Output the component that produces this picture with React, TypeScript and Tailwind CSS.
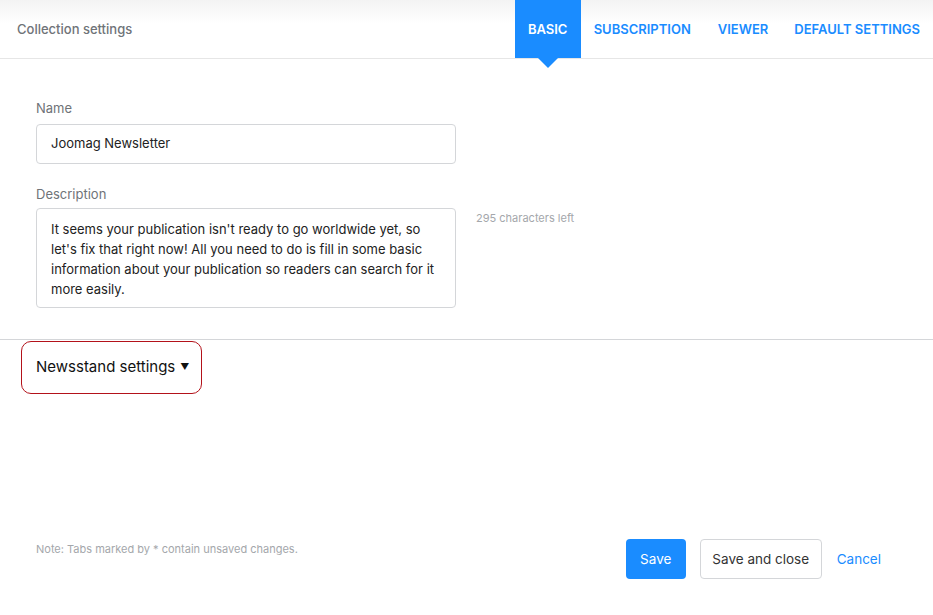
export default function App() {
  const font = { fontFamily: "Inter, 'Open Sans', sans-serif" };
  return (
    <div className="relative h-[615px] w-[933px] overflow-hidden bg-white text-[#222]" style={font}>
      {/* header */}
      <div className="flex h-[59px] items-stretch border-b border-[#e6e6e6] bg-gradient-to-b from-[#f3f3f3] to-white to-[40%]">
        <div className="flex items-center pl-[17px] pt-[1px] text-[13px] font-medium text-[#6f7378]">Collection settings</div>
        <div className="ml-auto flex items-stretch pr-[13px]">
          <div className="relative flex w-[66px] items-center justify-center bg-[#1a8cff] pt-[1px] text-[13px] font-semibold text-white">
            BASIC
            <span className="absolute left-1/2 top-full -ml-[10px] h-0 w-0 border-x-[10px] border-t-[10px] border-x-transparent border-t-[#1a8cff]" />
          </div>
          <div className="flex items-center pl-[13px] pt-[1px] text-[13px] font-semibold text-[#1a8cff]">SUBSCRIPTION</div>
          <div className="flex items-center pl-[27px] pt-[1px] text-[13px] font-semibold text-[#1a8cff]">VIEWER</div>
          <div className="flex items-center pl-[26px] pt-[1px] text-[13px] font-semibold text-[#1a8cff]">DEFAULT SETTINGS</div>
        </div>
      </div>

      {/* form */}
      <div className="pl-[36px] pt-[41px]">
        <div className="text-[13px] leading-[16px] text-[#6f7378]">Name</div>
        <div className="mt-[8px] flex h-[40px] w-[420px] items-center rounded-[4px] border border-[#d4d6d9] px-[14px] text-[13px]">
          Joomag Newsletter
        </div>
        <div className="mt-[22px] text-[13px] leading-[16px] text-[#6f7378]">Description</div>
        <div className="mt-[6px] flex items-start">
          <div className="h-[100px] w-[420px] rounded-[4px] border border-[#d4d6d9] px-[14px] pt-[10px] text-[13px] leading-[20px]">
            It seems your publication isn't ready to go worldwide yet, so let's fix that right now! All you need to do is fill in some basic information about your publication so readers can search for it more easily.
          </div>
          <div className="ml-[20px] pt-[2px] text-[11px] text-[#a4a7ab]">295 characters left</div>
        </div>
      </div>

      <div className="mt-[31px] border-t border-[#d4d6d9]" />

      <div className="ml-[21px] mt-[1px] inline-flex h-[53px] items-center rounded-[10px] border-[1.5px] border-[#b3121a] pb-[1px] pl-[14px] pr-[12px] text-[15px] text-[#111]">
        Newsstand settings
        <span className="ml-[5px] text-[9px]">▼</span>
      </div>

      {/* footer */}
      <div className="absolute bottom-[36px] left-0 right-0 flex items-start pl-[36px] pr-[52px]">
        <div className="pt-[2px] text-[11px] text-[#a4a7ab]">Note: Tabs marked by * contain unsaved changes.</div>
        <div className="ml-auto flex items-center">
          <button className="h-[40px] w-[60px] rounded-[4px] bg-[#1a8cff] text-[13.5px] text-white">Save</button>
          <button className="ml-[14px] h-[40px] w-[122px] rounded-[4px] border border-[#d4d6d9] text-[13.5px] text-[#333]">Save and close</button>
          <span className="ml-[15px] text-[13.5px] text-[#1a8cff]">Cancel</span>
        </div>
      </div>
    </div>
  );
}
